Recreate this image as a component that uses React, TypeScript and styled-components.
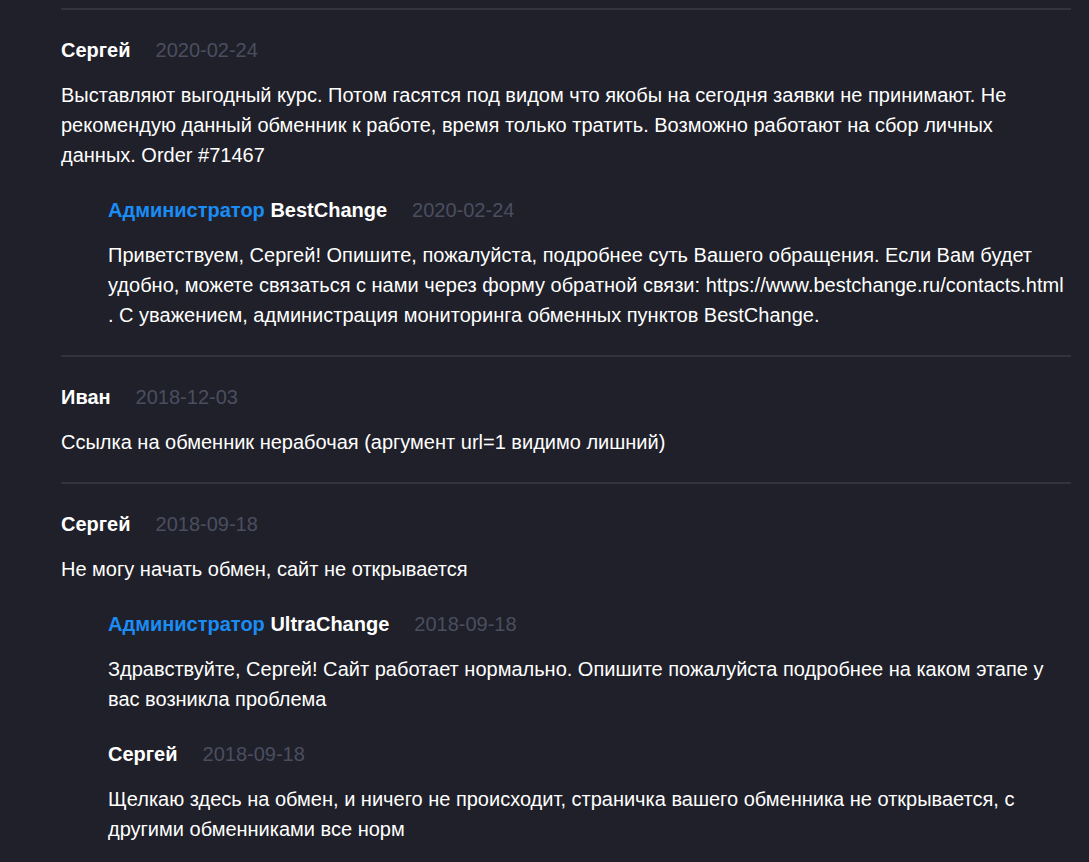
import React from 'react';
import styled, { createGlobalStyle } from 'styled-components';

const GlobalStyle = createGlobalStyle`
  html, body {
    margin: 0;
    padding: 0;
    background: #1f2029;
  }
  body {
    font-family: "Liberation Sans", Arial, sans-serif;
    color: #ffffff;
  }
`;

const Page = styled.div`
  padding: 8px 0 0 61px;
  width: 1010px;
`;

const Comment = styled.div`
  border-top: 2px solid #32333d;
  padding: 25px 0;
`;

const Reply = styled.div`
  margin-top: 25px;
  margin-left: 47px;
`;

const Header = styled.div`
  display: flex;
  align-items: baseline;
  gap: 25px;
  line-height: 30px;
  margin-bottom: 15px;
`;

const Author = styled.span`
  font-size: 20px;
  font-weight: bold;
  color: #ffffff;
`;

const Role = styled.span`
  color: #1a8cf5;
`;

const DateText = styled.span`
  font-size: 20px;
  color: #4b4e60;
`;

const Body = styled.div`
  font-size: 20px;
  line-height: 30px;
  color: #ffffff;
`;

interface ReplyData {
  author: string;
  admin?: boolean;
  date: string;
  text: string;
}

interface CommentData extends ReplyData {
  replies?: ReplyData[];
}

const comments: CommentData[] = [
  {
    author: 'Сергей',
    date: '2020-02-24',
    text: 'Выставляют выгодный курс. Потом гасятся под видом что якобы на сегодня заявки не принимают. Не рекомендую данный обменник к работе, время только тратить. Возможно работают на сбор личных данных. Order #71467',
    replies: [
      {
        author: 'BestChange',
        admin: true,
        date: '2020-02-24',
        text: 'Приветствуем, Сергей! Опишите, пожалуйста, подробнее суть Вашего обращения. Если Вам будет удобно, можете связаться с нами через форму обратной связи: https://www.bestchange.ru/contacts.html . С уважением, администрация мониторинга обменных пунктов BestChange.',
      },
    ],
  },
  {
    author: 'Иван',
    date: '2018-12-03',
    text: 'Ссылка на обменник нерабочая (аргумент url=1 видимо лишний)',
  },
  {
    author: 'Сергей',
    date: '2018-09-18',
    text: 'Не могу начать обмен, сайт не открывается',
    replies: [
      {
        author: 'UltraChange',
        admin: true,
        date: '2018-09-18',
        text: 'Здравствуйте, Сергей! Сайт работает нормально. Опишите пожалуйста подробнее на каком этапе у вас возникла проблема',
      },
      {
        author: 'Сергей',
        date: '2018-09-18',
        text: 'Щелкаю здесь на обмен, и ничего не происходит, страничка вашего обменника не открывается, с другими обменниками все норм',
      },
    ],
  },
];

const Entry: React.FC<{ item: ReplyData }> = ({ item }) => (
  <>
    <Header>
      <Author>
        {item.admin && <Role>Администратор </Role>}
        {item.author}
      </Author>
      <DateText>{item.date}</DateText>
    </Header>
    <Body>{item.text}</Body>
  </>
);

const App: React.FC = () => (
  <>
    <GlobalStyle />
    <Page>
      {comments.map((c, i) => (
        <Comment key={i}>
          <Entry item={c} />
          {c.replies?.map((r, j) => (
            <Reply key={j}>
              <Entry item={r} />
            </Reply>
          ))}
        </Comment>
      ))}
    </Page>
  </>
);

export default App;
